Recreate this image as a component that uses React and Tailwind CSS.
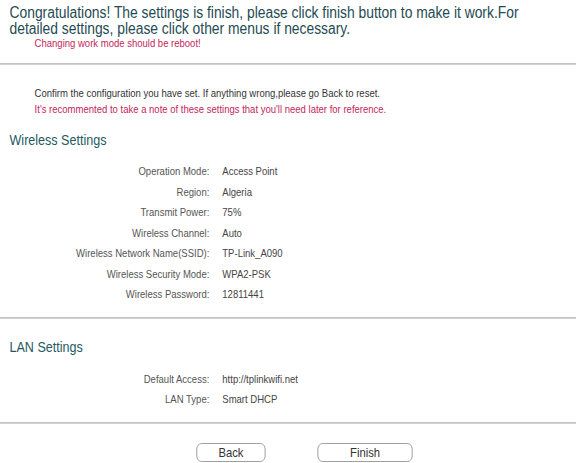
import React from 'react';

const wireless = [
    ['Operation Mode:', 'Access Point'],
    ['Region:', 'Algeria'],
    ['Transmit Power:', '75%'],
    ['Wireless Channel:', 'Auto'],
    ['Wireless Network Name(SSID):', 'TP-Link_A090'],
    ['Wireless Security Mode:', 'WPA2-PSK'],
    ['Wireless Password:', '12811441'],
];

const lan = [
    ['Default Access:', 'http://tplinkwifi.net'],
    ['LAN Type:', 'Smart DHCP'],
];

const Rows = ({ rows }) => (
    <div className="flex flex-col">
        {rows.map(([label, value]) => (
            <div key={label} className="flex items-center h-[20.5px] text-[11px] text-[#555]">
                <span className="w-[242px] text-right">{label}</span>
                <span className="ml-[15px] text-[#444]">{value}</span>
            </div>
        ))}
    </div>
);

const Divider = () => <div className="h-[2px] bg-[#d2d2d2] border-t border-[#c4c4c4]" />;

export default function App() {
    return (
        <div className="w-[576px] h-[463px] bg-white overflow-hidden font-['Liberation_Sans',Arial,sans-serif]">
            {/* the page is drawn a bit condensed, like the original capture */}
            <div className="w-[666px] origin-top-left scale-x-[0.865]">
                <div className="pl-[11px] pt-[5px]">
                    <h1 className="w-[590px] text-[16px] leading-[16px] text-[#1f4b53]">
                        Congratulations! The settings is finish, please click finish button to make it work.For detailed settings, please click other menus if necessary.
                    </h1>
                    <p className="pl-[29px] text-[11px] leading-[12px] text-[#c4265d]">Changing work mode should be reboot!</p>
                </div>

                <div className="mt-[14px]"><Divider /></div>

                <div className="pl-[40px] pt-[20px] text-[11px] leading-[16px]">
                    <p className="text-[#333]">Confirm the configuration you have set. If anything wrong,please go Back to reset.</p>
                    <p className="text-[#c4265d]">It's recommented to take a note of these settings that you'll need later for reference.</p>
                </div>

                <h2 className="pl-[11px] mt-[14px] text-[14.5px] leading-[18px] text-[#1f5a63]">Wireless Settings</h2>
                <div className="mt-[12px]"><Rows rows={wireless} /></div>

                <div className="mt-[12px]"><Divider /></div>

                <h2 className="pl-[11px] mt-[19px] text-[14.5px] leading-[18px] text-[#1f5a63]">LAN Settings</h2>
                <div className="mt-[13px]"><Rows rows={lan} /></div>

                <div className="mt-[12px]"><Divider /></div>

                <div className="flex mt-[19px] pl-[227px] gap-[60px]">
                    <button className="w-[80px] h-[19px] rounded-[6px] border border-[#999] bg-white text-[13px] leading-[17px] text-[#333]">Back</button>
                    <button className="w-[110px] h-[19px] rounded-[6px] border border-[#999] bg-white text-[13px] leading-[17px] text-[#333]">Finish</button>
                </div>
            </div>
        </div>
    );
}
